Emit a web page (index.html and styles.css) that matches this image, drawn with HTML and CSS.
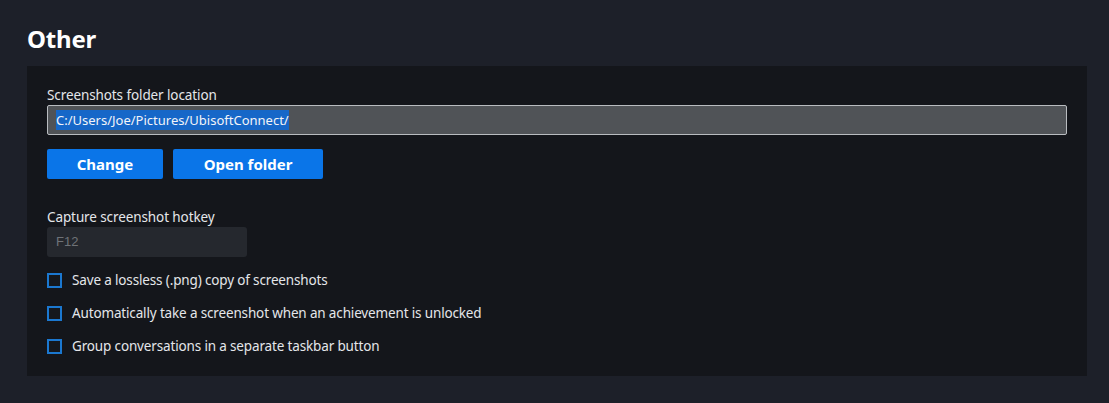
FILE: index.html
```html
<!DOCTYPE html>
<html>
<head>
<meta charset="utf-8">
<link rel="stylesheet" href="styles.css">
</head>
<body>
<div class="page">
  <h2 class="title">Other</h2>
  <section class="panel">
    <div class="field">
      <label class="label">Screenshots folder location</label>
      <div class="path-input"><span class="sel">C:/Users/Joe/Pictures/UbisoftConnect/</span></div>
    </div>
    <div class="buttons">
      <button class="btn btn-change">Change</button>
      <button class="btn btn-open">Open folder</button>
    </div>
    <div class="field hotkey-field">
      <label class="label">Capture screenshot hotkey</label>
      <div class="hotkey-input">F12</div>
    </div>
    <ul class="checks">
      <li class="check"><span class="box"></span><span>Save a lossless (.png) copy of screenshots</span></li>
      <li class="check"><span class="box"></span><span>Automatically take a screenshot when an achievement is unlocked</span></li>
      <li class="check"><span class="box"></span><span>Group conversations in a separate taskbar button</span></li>
    </ul>
  </section>
</div>
</body>
</html>
```

FILE: styles.css
```css
html, body {
  margin: 0;
  padding: 0;
  background: #1d2029;
  width: 1109px;
  height: 403px;
  overflow: hidden;
}
body {
  font-family: "Noto Sans", "Open Sans", sans-serif;
  color: #e8eaee;
}
.page {
  padding: 22px 22px 0 27px;
}
.title {
  margin: 0;
  font-size: 24px;
  font-weight: 700;
  line-height: 34px;
  color: #ffffff;
  height: 44px;
  letter-spacing: -0.2px;
}
.panel {
  background: #14161b;
  width: 1060px;
  box-sizing: border-box;
  padding: 19px 20px 20px 20px;
  height: 310px;
}
.field {
  display: flex;
  flex-direction: column;
}
.label {
  font-size: 13.5px;
  line-height: 20px;
  color: #e4e6ea;
  letter-spacing: -0.1px;
}
.path-input {
  margin-top: 0;
  height: 30px;
  box-sizing: border-box;
  background: #505357;
  border: 1px solid #b9bcc0;
  border-radius: 2px;
  padding: 4px 0 0 8px;
  font-size: 13px;
  line-height: 20px;
}
.sel {
  background: #1667c8;
  color: #f2f4f8;
  padding: 1px 0;
}
.buttons {
  display: flex;
  gap: 10px;
  margin-top: 14px;
}
.btn {
  height: 30px;
  border: none;
  border-radius: 2px;
  background: #0a75e8;
  color: #ffffff;
  font-family: "Noto Sans", "Open Sans", sans-serif;
  font-weight: 700;
  font-size: 15px;
  padding: 0;
}
.btn-change { width: 116px; }
.btn-open { width: 150px; }
.hotkey-field {
  margin-top: 28px;
}
.hotkey-input {
  width: 200px;
  height: 30px;
  box-sizing: border-box;
  background: #25282e;
  border-radius: 3px;
  padding: 6px 0 0 9px;
  font-family: "Liberation Sans", Arial, sans-serif;
  font-size: 13px;
  line-height: 18px;
  color: #6f7378;
}
.checks {
  list-style: none;
  margin: 13px 0 0 0;
  padding: 0;
  display: flex;
  flex-direction: column;
  gap: 13px;
}
.check {
  display: flex;
  align-items: center;
  gap: 10px;
  height: 20px;
  font-size: 13.5px;
  color: #e4e6ea;
  letter-spacing: -0.15px;
}
.box {
  width: 15px;
  height: 15px;
  box-sizing: border-box;
  border: 2px solid #1b78d0;
  background: #15181d;
  flex: none;
}
```
